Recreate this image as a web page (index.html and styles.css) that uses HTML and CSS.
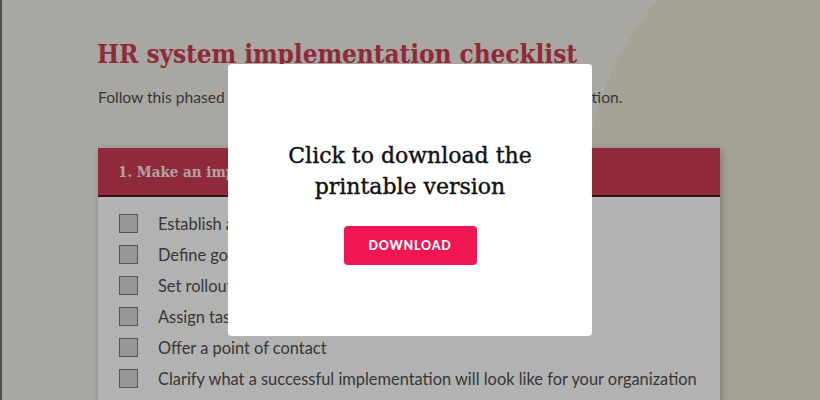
FILE: index.html
```html
<!DOCTYPE html>
<html lang="en">
<head>
<meta charset="utf-8">
<title>HR system implementation checklist</title>
<link rel="stylesheet" href="styles.css">
</head>
<body>
<div class="page">
  <div class="bg-circle"></div>
  <main class="content">
    <h1 class="title">HR system implementation checklist</h1>
    <p class="intro">Follow this phased checklist to plan for a smooth HR system implementation.</p>
    <section class="card">
      <div class="card-head"><h2>1. Make an implementation plan</h2></div>
      <ul class="items">
        <li><span class="box"></span>Establish a project team</li>
        <li><span class="box"></span>Define goals and priorities</li>
        <li><span class="box"></span>Set rollout timelines</li>
        <li><span class="box"></span>Assign tasks and owners</li>
        <li><span class="box"></span>Offer a point of contact</li>
        <li><span class="box"></span>Clarify what a successful implementation will look like for your organization</li>
        <li><span class="box"></span>Plan communication to employees</li>
      </ul>
    </section>
  </main>
</div>
<div class="overlay">
  <div class="modal">
    <h2 class="modal-title">Click to download the<br>printable version</h2>
    <a class="btn" href="#">DOWNLOAD</a>
  </div>
</div>
</body>
</html>
```

FILE: styles.css
```css
html, body {
  margin: 0;
  padding: 0;
  height: 100%;
  overflow: hidden;
}
body {
  font-family: Lato, "Open Sans", sans-serif;
  background: #f1f0e9;
}
.page {
  position: relative;
  height: 400px;
  overflow: hidden;
  border-left: 2px solid #737373;
  background: #f1f0e9;
}
.bg-circle {
  position: absolute;
  left: 585px;
  top: -90px;
  width: 550px;
  height: 550px;
  border-radius: 50%;
  background: #efe9d9;
}
.content {
  position: relative;
  width: 623px;
  padding: 38px 0 0 95px;
}
.title {
  margin: 0;
  font-family: "DejaVu Serif Condensed", "DejaVu Serif", serif;
  font-weight: bold;
  font-size: 26px;
  line-height: 32px;
  color: #ce3c54;
  letter-spacing: -0.1px;
}
.intro {
  margin: 17px 0 0 1px;
  font-size: 15.6px;
  line-height: 20px;
  color: #4f4f4f;
}
.card {
  margin: 41px 0 0 1px;
  background: #fff;
  box-shadow: 2px 2px 8px rgba(0,0,0,0.25);
}
.card-head {
  background: #ce3c54;
  height: 47px;
  border-bottom: 2px solid #5c1726;
  display: flex;
  align-items: center;
  padding-left: 20px;
}
.card-head h2 {
  margin: 0;
  font-family: "DejaVu Serif Condensed", "DejaVu Serif", serif;
  font-size: 15px;
  font-weight: bold;
  color: #fff;
  opacity: 0.9;
}
.items {
  list-style: none;
  margin: 0;
  padding: 11px 0 0 21px;
}
.items li {
  display: flex;
  align-items: center;
  gap: 20px;
  height: 31px;
  font-size: 16.4px;
  color: #4f4f4f;
}
.box {
  flex: none;
  width: 17px;
  height: 17px;
  border: 1px solid #7a7a7a;
  background: #d8d8d8;
}
.overlay {
  position: fixed;
  inset: 0;
  background: rgba(0,0,0,0.3);
  display: flex;
  align-items: center;
  justify-content: center;
}
.modal {
  box-sizing: border-box;
  width: 364px;
  height: 272px;
  padding-top: 4px;
  background: #fff;
  border-radius: 4px;
  display: flex;
  flex-direction: column;
  align-items: center;
  justify-content: center;
  gap: 24px;
}
.modal-title {
  margin: 0;
  font-family: "DejaVu Serif", serif;
  font-weight: normal;
  font-size: 22px;
  line-height: 31px;
  text-align: center;
  color: #111;
  -webkit-text-stroke: 0.4px #111;
}
.btn {
  display: flex;
  align-items: center;
  justify-content: center;
  width: 133px;
  height: 39px;
  border-radius: 4px;
  background: #ef1651;
  color: #fff;
  text-decoration: none;
  font-family: Lato, sans-serif;
  font-weight: 900;
  font-size: 12.5px;
  letter-spacing: 0.8px;
}
```
